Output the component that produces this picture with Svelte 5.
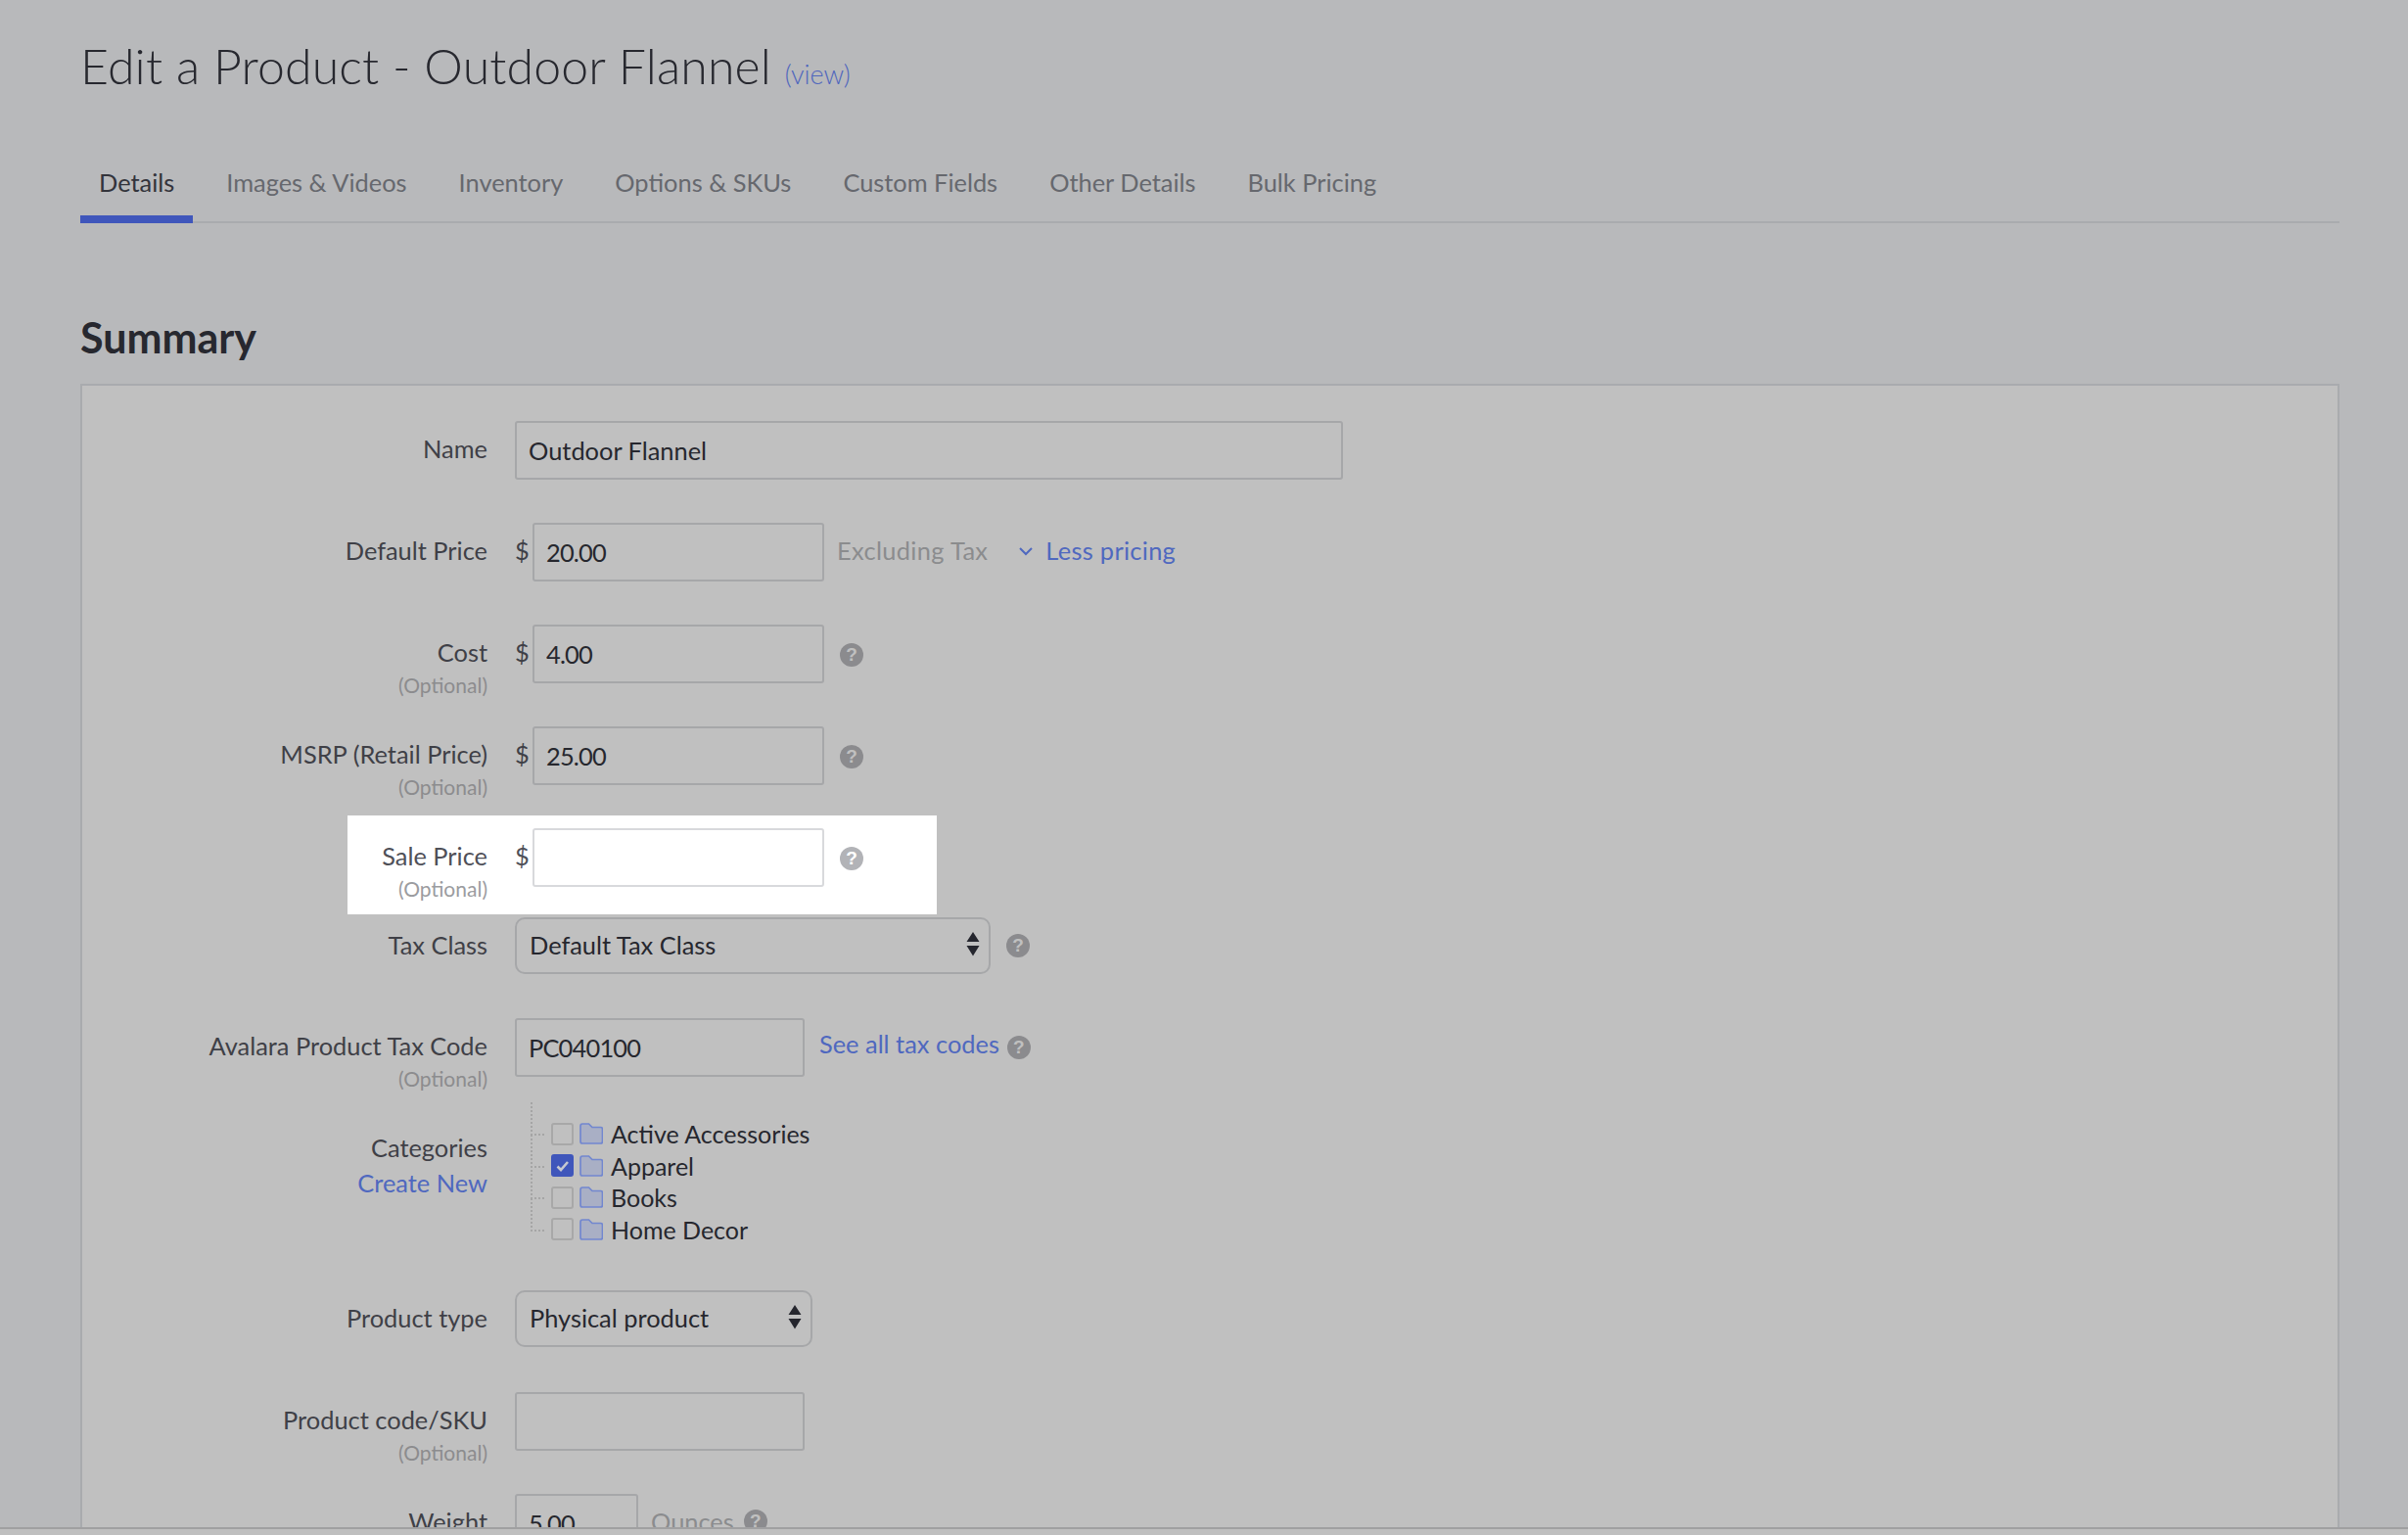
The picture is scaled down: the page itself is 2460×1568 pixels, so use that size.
<script>
  const tabs = ['Details', 'Images & Videos', 'Inventory', 'Options & SKUs', 'Custom Fields', 'Other Details', 'Bulk Pricing'];
  const categories = [
    { name: 'Active Accessories', checked: false },
    { name: 'Apparel', checked: true },
    { name: 'Books', checked: false },
    { name: 'Home Decor', checked: false }
  ];
</script>

<div class="page">
  <main class="main">
    <h1 class="title">Edit a Product - Outdoor Flannel <a class="view" href="#view">(view)</a></h1>

    <nav class="tabs">
      {#each tabs as tab, i}
        <a class="tab" class:active={i === 0} href="#tab">{tab}</a>
      {/each}
    </nav>

    <h2 class="heading">Summary</h2>

    <section class="panel">
      <div class="row">
        <div class="label"><span>Name</span></div>
        <input class="input wide" value="Outdoor Flannel" />
      </div>

      <div class="row">
        <div class="label"><span>Default Price</span></div>
        <span class="dollar">$</span>
        <input class="input price num" value="20.00" />
        <span class="muted after">Excluding Tax</span>
        <svg class="chevron" width="16" height="10" viewBox="0 0 16 10"><path d="M2 2l6 6 6-6" fill="none" stroke="#4f68bf" stroke-width="2" /></svg>
        <a class="link less" href="#less">Less pricing</a>
      </div>

      <div class="row">
        <div class="label"><span>Cost</span><small>(Optional)</small></div>
        <span class="dollar">$</span>
        <input class="input price num" value="4.00" />
        <span class="help price-help">?</span>
      </div>

      <div class="row">
        <div class="label"><span>MSRP (Retail Price)</span><small>(Optional)</small></div>
        <span class="dollar">$</span>
        <input class="input price num" value="25.00" />
        <span class="help price-help">?</span>
      </div>

      <div class="row spot">
        <div class="label"><span>Sale Price</span><small>(Optional)</small></div>
        <span class="dollar">$</span>
        <input class="input price" value="" />
        <span class="help price-help">?</span>
      </div>

      <div class="row tax-row">
        <div class="label"><span>Tax Class</span></div>
        <div class="select-wrap tax">
          <select class="select"><option>Default Tax Class</option></select>
          <svg class="arrows" width="14" height="25" viewBox="0 0 14 25"><path d="M7 0l6.500 10H.5zM.5 14h13L7 24.500z" fill="#25262e" /></svg>
        </div>
        <span class="help tax-help">?</span>
      </div>

      <div class="row">
        <div class="label"><span>Avalara Product Tax Code</span><small>(Optional)</small></div>
        <input class="input code num" value="PC040100" />
        <a class="link codes" href="#codes">See all tax codes</a>
        <span class="help codes-help">?</span>
      </div>

      <div class="row cats">
        <div class="label"><span>Categories</span><a class="link create" href="#new">Create New</a></div>
        <ul class="tree">
          {#each categories as cat}
            <li class="node">
              <span class="check" class:checked={cat.checked}>
                {#if cat.checked}
                  <svg width="14" height="12" viewBox="0 0 14 12"><path d="M1.500 6.500l3.500 3.500 7-8" fill="none" stroke="#c6c8d0" stroke-width="2.600" /></svg>
                {/if}
              </span>
              <svg class="folder" width="24" height="22" viewBox="0 0 24 22"><path d="M1 3.500Q1 1 3 1h6.500l3.500 3.500h8.500q2 0 2 2V19q0 2-2 2H3q-2 0-2-2z" fill="#a9afc5" stroke="#7287cf" stroke-width="1.700" /></svg>
              <span class="node-name">{cat.name}</span>
            </li>
          {/each}
        </ul>
      </div>

      <div class="row">
        <div class="label"><span>Product type</span></div>
        <div class="select-wrap type">
          <select class="select"><option>Physical product</option></select>
          <svg class="arrows" width="14" height="25" viewBox="0 0 14 25"><path d="M7 0l6.500 10H.5zM.5 14h13L7 24.500z" fill="#25262e" /></svg>
        </div>
      </div>

      <div class="row">
        <div class="label"><span>Product code/SKU</span><small>(Optional)</small></div>
        <input class="input code" value="" />
      </div>

      <div class="row weight-row">
        <div class="label"><span>Weight</span></div>
        <input class="input weight num" value="5.00" />
        <span class="muted ounces">Ounces</span>
        <span class="help weight-help">?</span>
      </div>
    </section>
  </main>
</div>

<style>
  :global(body) {
    margin: 0;
    background: #bfbfbf;
  }

  .page {
    height: 1568px;
    overflow: hidden;
    background: #bfbfbf;
    font-family: Lato, "Open Sans", sans-serif;
    font-size: 25.4px;
    color: #3f4047;
  }

  .main {
    height: 1562px;
    box-sizing: border-box;
    padding: 0 70px 0 82px;
    overflow: hidden;
    background: #b8b9bb;
    border-bottom: 2px solid #a0a0a1;
  }

  .title {
    margin: 0;
    padding-top: 32px;
    height: 150px;
    box-sizing: border-box;
    font-size: 50px;
    line-height: 70px;
    font-weight: 300;
    letter-spacing: 0.15px;
    color: #27282f;
  }

  .view {
    font-size: 27px;
    letter-spacing: 0;
    color: #5067bd;
    text-decoration: none;
  }

  .tabs {
    display: flex;
    height: 78px;
    box-sizing: border-box;
    border-bottom: 2px solid #a9abae;
  }

  .tab {
    height: 78px;
    box-sizing: border-box;
    padding: 18px 19px 0;
    margin-right: 15px;
    line-height: 36px;
    color: #66686e;
    text-decoration: none;
  }

  .tab.active {
    color: #33343b;
    border-bottom: 8px solid #3f56bb;
  }

  .heading {
    margin: 0;
    height: 164px;
    padding-top: 92px;
    box-sizing: border-box;
    font-size: 43px;
    line-height: 50px;
    font-weight: 700;
    color: #27282f;
  }

  .panel {
    padding-top: 36px;
    background: #c0c0c0;
    border: 2px solid #a9abae;
    border-bottom: 0;
    height: 1400px;
    box-sizing: border-box;
  }

  .row {
    display: flex;
    align-items: flex-start;
    height: 104px;
    position: relative;
  }

  .label {
    width: 414px;
    margin-right: 28px;
    padding-top: 10px;
    text-align: right;
    flex: none;
    line-height: 36px;
    position: relative;
  }

  .label span {
    display: block;
  }

  .label small {
    display: block;
    font-size: 21px;
    line-height: 32px;
    color: #8c8c8e;
  }

  .input {
    box-sizing: border-box;
    height: 60px;
    padding: 0 12px;
    border: 2px solid #a6a7a9;
    border-radius: 3px;
    background: transparent;
    font: inherit;
    color: #26272e;
    position: relative;
    outline: none;
  }

  .num { letter-spacing: -0.8px; }
  .wide { width: 846px; }
  .price { width: 298px; }
  .code { width: 296px; }
  .weight { width: 126px; }

  .dollar {
    width: 18px;
    line-height: 36px;
    padding-top: 10px;
    position: relative;
  }

  .muted {
    color: #8b8c8e;
    line-height: 36px;
    padding-top: 10px;
  }

  .after {
    margin-left: 13px;
    letter-spacing: 0.35px;
  }

  .chevron {
    margin: 24px 0 0 31px;
  }

  .link {
    color: #4f68bf;
    text-decoration: none;
    line-height: 36px;
    padding-top: 10px;
  }

  .less {
    margin-left: 12px;
    letter-spacing: 0.3px;
  }

  .help {
    display: flex;
    justify-content: center;
    align-items: center;
    width: 24px;
    height: 24px;
    border-radius: 50%;
    background: #8b8b8e;
    color: #c0c0c0;
    font-family: "Liberation Sans", sans-serif;
    font-size: 19px;
    font-weight: 700;
    position: relative;
  }

  .price-help { margin: 19px 0 0 16px; }
  .tax-help { margin: 17px 0 0 16px; }
  .codes-help { margin: 18px 0 0 8px; }
  .weight-help { margin: 16px 0 0 10px; }

  .codes {
    margin-left: 15px;
    padding-top: 8px;
  }

  .ounces { margin-left: 13px; }

  /* spotlight stays white over the dimmed page */
  .spot {
    height: 91px;
    color: #4f5058;
  }

  .spot::before {
    content: '';
    position: absolute;
    left: 271px;
    top: -13px;
    width: 602px;
    height: 101px;
    background: #fff;
  }

  .spot .input {
    border-color: #d8d9dc;
    background: #fff;
  }

  .spot .help {
    background: #b2b3b7;
    color: #fff;
  }

  .spot .label small { color: #9b9ca0; }

  .tax-row { height: 103px; }

  .select-wrap {
    position: relative;
    height: 58px;
  }

  .tax { width: 486px; }
  .type { width: 304px; }

  .select {
    appearance: none;
    width: 100%;
    height: 100%;
    box-sizing: border-box;
    padding: 0 13px 2px;
    border: 2px solid #a6a7a9;
    border-radius: 10px;
    background: transparent;
    font: inherit;
    color: #26272e;
  }

  .arrows {
    position: absolute;
    right: 11px;
    top: 15px;
  }

  .cats { height: 174px; }

  .create {
    display: block;
    padding-top: 0;
  }

  .tree {
    list-style: none;
    margin: -2px 0 0 16px;
    padding: 0;
    font-size: 25px;
  }

  .node {
    display: flex;
    align-items: center;
    height: 32.500px;
    padding-left: 21px;
    position: relative;
    color: #26272e;
    line-height: 32px;
  }

  .node::before {
    content: '';
    position: absolute;
    left: 0;
    top: -16px;
    width: 12px;
    height: 32px;
    border-left: 2px dotted #a5a5a5;
    border-bottom: 2px dotted #a5a5a5;
  }

  .check {
    display: flex;
    justify-content: center;
    align-items: center;
    width: 23px;
    height: 23px;
    box-sizing: border-box;
    border: 2px solid #a8a8a8;
    border-radius: 3px;
    margin-right: 6px;
  }

  .check.checked {
    background: #3f56bb;
    border-color: #3f56bb;
  }

  .folder {
    margin-right: 8px;
  }
</style>
